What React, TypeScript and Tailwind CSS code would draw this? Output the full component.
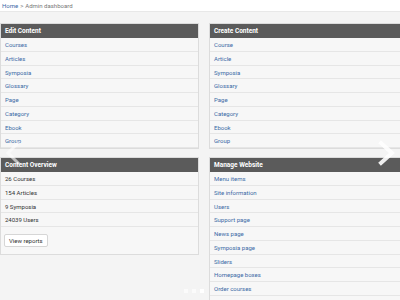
const editItems = ["Courses", "Articles", "Symposia", "Glossary", "Page", "Category", "Ebook", "Group"];
const createItems = ["Course", "Article", "Symposia", "Glossary", "Page", "Category", "Ebook", "Group"];
const overview = ["26 Courses", "154 Articles", "9 Symposia", "24039 Users"];
const manageItems = [
  "Menu items",
  "Site information",
  "Users",
  "Support page",
  "News page",
  "Symposia page",
  "Sliders",
  "Homepage boxes",
  "Order courses",
  "Subscriptions",
];

function Panel({ title, children }: { title: string; children: React.ReactNode }) {
  return (
    <div className="border border-[#dcdcdc] bg-[#f7f7f7]">
      <div className="h-[14px] bg-[#5b5b5b] text-white font-bold text-[6.5px] leading-[14px] px-[4px]">{title}</div>
      {children}
    </div>
  );
}

function Row({ children, link }: { children: React.ReactNode; link?: boolean }) {
  return (
    <div
      className={
        "h-[13.75px] leading-[13.75px] px-[4px] text-[6px] border-b border-[#e6e6e6] " +
        (link ? "text-[#3b6aa6]" : "text-[#333]")
      }
    >
      {children}
    </div>
  );
}

export default function App() {
  return (
    <div className="relative w-[400px] h-[300px] overflow-hidden bg-[#f4f4f4] font-['Roboto',sans-serif]">
      <div className="h-[12px] bg-white border-b border-[#e8e8e8] px-[2px] text-[6px] leading-[11px] text-[#777]">
        <span className="text-[#3b6aa6]">Home</span>
        <span className="mx-[2px]">&gt;</span>
        <span>Admin dashboard</span>
      </div>
      <div className="flex gap-[10px] pt-[11px]">
        <div className="w-[199px] shrink-0 flex flex-col gap-[8px]">
          <Panel title="Edit Content">
            {editItems.map((t) => (
              <Row key={t} link>
                {t}
              </Row>
            ))}
          </Panel>
          <Panel title="Content Overview">
            {overview.map((t) => (
              <Row key={t}>{t}</Row>
            ))}
            <div className="h-[27px] px-[3px] flex items-center">
              <div className="h-[13px] px-[4px] bg-white border border-[#d6d6d6] rounded-[2px] text-[6px] leading-[11px] text-[#333]">
                View reports
              </div>
            </div>
          </Panel>
        </div>
        <div className="w-[200px] shrink-0 flex flex-col gap-[8px]">
          <Panel title="Create Content">
            {createItems.map((t) => (
              <Row key={t} link>
                {t}
              </Row>
            ))}
          </Panel>
          <Panel title="Manage Website">
            {manageItems.map((t) => (
              <Row key={t} link>
                {t}
              </Row>
            ))}
          </Panel>
        </div>
      </div>

      <svg className="absolute left-[3px] top-[140px] opacity-60" width="20" height="26" viewBox="0 0 20 26">
        <path d="M15 3 L5 13 L15 23" fill="none" stroke="white" strokeWidth="3" strokeLinecap="square" />
      </svg>
      <svg className="absolute left-[377px] top-[140px] opacity-90" width="20" height="26" viewBox="0 0 20 26">
        <path d="M4 3 L15 13 L4 23" fill="none" stroke="white" strokeWidth="4" strokeLinecap="square" />
      </svg>
      <div className="absolute left-[184px] top-[289px] flex gap-[4px]">
        <div className="w-[4px] h-[4px] bg-white/60" />
        <div className="w-[4px] h-[4px] bg-white/60" />
        <div className="w-[4px] h-[4px] bg-white" />
      </div>
    </div>
  );
}
